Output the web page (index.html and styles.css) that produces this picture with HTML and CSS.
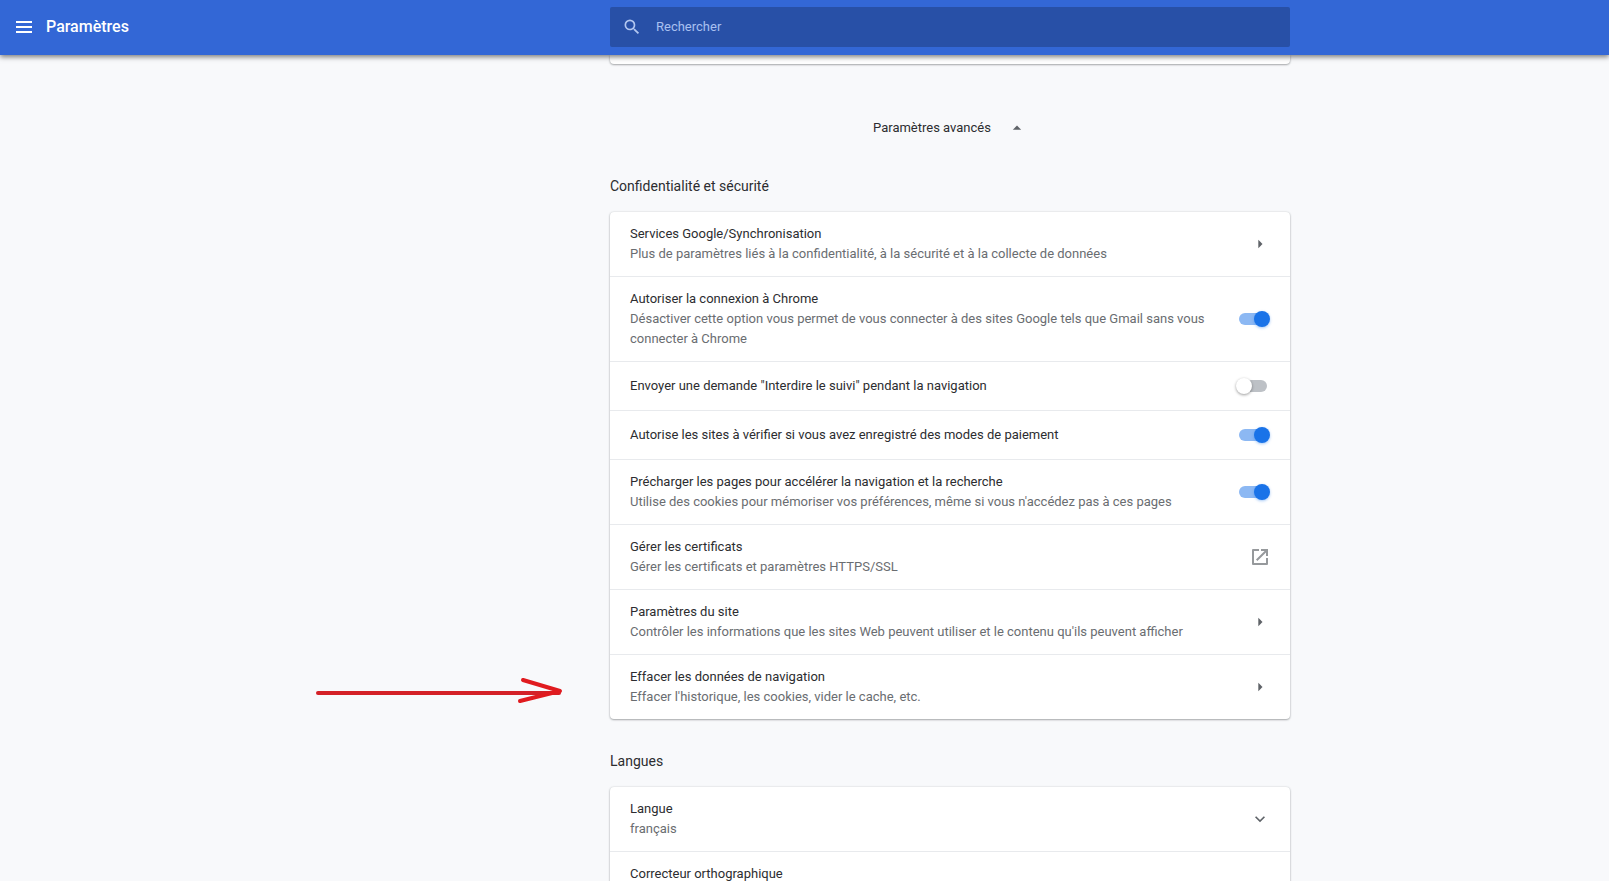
FILE: index.html
```html
<!DOCTYPE html>
<html lang="fr">
<head>
<meta charset="utf-8">
<title>Paramètres</title>
<link rel="stylesheet" href="styles.css">
</head>
<body>
<header class="toolbar">
  <div class="toolbar-left">
    <button class="menu-button" type="button" aria-label="Menu principal">
      <svg width="16" height="12" viewBox="0 0 16 12" fill="currentColor"><path d="M0 0h16v2H0zM0 5h16v2H0zM0 10h16v2H0z"/></svg>
    </button>
    <h1 class="toolbar-title">Paramètres</h1>
  </div>
  <label class="search">
    <svg class="search-icon" width="20" height="20" viewBox="0 0 24 24" fill="currentColor"><path d="M15.5 14h-.79l-.28-.27A6.471 6.471 0 0 0 16 9.5 6.5 6.5 0 1 0 9.5 16c1.61 0 3.09-.59 4.23-1.57l.27.28v.79l5 4.99L20.49 19l-4.99-5zm-6 0C7.01 14 5 11.99 5 9.5S7.01 5 9.5 5 14 7.01 14 9.5 11.99 14 9.5 14z"/></svg>
    <input class="search-input" type="search" placeholder="Rechercher" aria-label="Rechercher">
  </label>
</header>

<main class="page">
  <div class="content">
    <div class="card card-end"></div>

    <button class="advanced" type="button" aria-expanded="true">
      Paramètres avancés
      <svg width="20" height="20" viewBox="0 0 24 24" fill="#5f6368"><path d="M7 14l5-5 5 5z"/></svg>
    </button>

    <section>
      <h2 class="section-title">Confidentialité et sécurité</h2>
      <div class="card">
        <button class="row" type="button">
          <span class="text"><span class="label">Services Google/Synchronisation</span><span class="sub">Plus de paramètres liés à la confidentialité, à la sécurité et à la collecte de données</span></span>
          <svg class="icon" viewBox="0 0 24 24"><path d="M10 17l5-5-5-5z"/></svg>
        </button>
        <div class="row">
          <div class="text"><label class="label" for="signin">Autoriser la connexion à Chrome</label><span class="sub" id="signin-sub">Désactiver cette option vous permet de vous connecter à des sites Google tels que Gmail sans vous connecter à Chrome</span></div>
          <input class="toggle" type="checkbox" id="signin" aria-describedby="signin-sub" checked>
        </div>
        <div class="row">
          <div class="text"><label class="label" for="dnt">Envoyer une demande "Interdire le suivi" pendant la navigation</label></div>
          <input class="toggle" type="checkbox" id="dnt">
        </div>
        <div class="row">
          <div class="text"><label class="label" for="payment">Autorise les sites à vérifier si vous avez enregistré des modes de paiement</label></div>
          <input class="toggle" type="checkbox" id="payment" checked>
        </div>
        <div class="row">
          <div class="text"><label class="label" for="preload">Précharger les pages pour accélérer la navigation et la recherche</label><span class="sub" id="preload-sub">Utilise des cookies pour mémoriser vos préférences, même si vous n'accédez pas à ces pages</span></div>
          <input class="toggle" type="checkbox" id="preload" aria-describedby="preload-sub" checked>
        </div>
        <button class="row" type="button">
          <span class="text"><span class="label">Gérer les certificats</span><span class="sub">Gérer les certificats et paramètres HTTPS/SSL</span></span>
          <svg class="icon icon-external" viewBox="0 0 20 20"><path d="M3 2h6v2H4v12h12v-5h2v6a1 1 0 0 1-1 1H3a1 1 0 0 1-1-1V3a1 1 0 0 1 1-1zM11 2h7v7h-2V5.400L7.400 14 6 12.600 14.600 4H11z"/></svg>
        </button>
        <button class="row" type="button">
          <span class="text"><span class="label">Paramètres du site</span><span class="sub">Contrôler les informations que les sites Web peuvent utiliser et le contenu qu'ils peuvent afficher</span></span>
          <svg class="icon" viewBox="0 0 24 24"><path d="M10 17l5-5-5-5z"/></svg>
        </button>
        <button class="row" type="button">
          <span class="text"><span class="label">Effacer les données de navigation</span><span class="sub">Effacer l'historique, les cookies, vider le cache, etc.</span></span>
          <svg class="icon" viewBox="0 0 24 24"><path d="M10 17l5-5-5-5z"/></svg>
          <svg class="pointer" width="250" height="30" viewBox="0 0 250 30" fill="none" stroke-width="4" stroke-linecap="round" stroke-linejoin="round"><path d="M4 16H245" stroke="#d42127"/><path d="M209 3L246 14 206 24" stroke="#e01b1f"/></svg>
        </button>
      </div>
    </section>

    <section>
      <h2 class="section-title">Langues</h2>
      <div class="card">
        <button class="row" type="button" aria-expanded="false">
          <span class="text"><span class="label">Langue</span><span class="sub">français</span></span>
          <svg class="icon" viewBox="0 0 24 24"><path d="M16.590 8.590L12 13.170 7.410 8.590 6 10l6 6 6-6z"/></svg>
        </button>
        <button class="row row-top" type="button" aria-expanded="false">
          <span class="text"><span class="label">Correcteur orthographique</span></span>
        </button>
      </div>
    </section>
  </div>
</main>
</body>
</html>
```

FILE: styles.css
```css
* {
  box-sizing: border-box;
}

body {
  margin: 0;
  height: 100vh;
  display: flex;
  flex-direction: column;
  overflow: hidden;
  background: #f8f9fb;
  color: #2c2d30;
  font: 13px/20px Roboto, "Liberation Sans", sans-serif;
}

button {
  margin: 0;
  border: 0;
  padding: 0;
  background: none;
  color: inherit;
  font: inherit;
  text-align: left;
  cursor: pointer;
}

/* The header and the page share one set of columns. */
.toolbar,
.page {
  display: grid;
  grid-template-columns: 291px 1fr minmax(0, 680px) 1fr;
}

.toolbar {
  position: relative;
  z-index: 1;
  flex: none;
  align-items: center;
  height: 55px;
  padding-bottom: 1px;
  background: #3367d6;
  box-shadow: 0 2px 5px rgba(0, 0, 0, 0.5);
  color: #fff;
}

.toolbar-left {
  grid-column: 1 / 3;
  display: flex;
  align-items: center;
  gap: 14px;
  padding-left: 16px;
}

.menu-button {
  display: flex;
}

.toolbar-title {
  margin: 0;
  font-size: 16px;
  font-weight: 500;
}

.search {
  display: flex;
  align-items: center;
  gap: 14px;
  height: 40px;
  padding: 0 12px;
  border-radius: 2px;
  background: #2850a7;
  color: #b3c7f0;
}

.search-icon {
  flex: none;
}

.search-input {
  flex: 1;
  min-width: 0;
  padding: 0;
  border: 0;
  outline: 0;
  background: none;
  color: #fff;
  font: inherit;
}

.search-input::placeholder {
  color: #a9c0f0;
}

.page {
  flex: 1;
  min-height: 0;
  overflow: hidden;
}

.content {
  grid-column: 3;
  display: flex;
  flex-direction: column;
}

.card {
  border-radius: 4px;
  background: #fff;
  box-shadow: 0 1px 2px rgba(60, 64, 67, 0.4), 0 0 2px rgba(60, 64, 67, 0.2);
}

.card-end {
  flex: none;
  height: 9px;
  border-radius: 0 0 4px 4px;
}

.advanced {
  display: flex;
  align-items: center;
  align-self: center;
  gap: 16px;
  margin-top: 54px;
}

.section-title {
  margin: 0;
  padding: 32px 0 16px;
  font-size: 14px;
  font-weight: 400;
}

.advanced + section .section-title {
  padding-top: 38px;
}

.row {
  position: relative;
  display: flex;
  align-items: center;
  gap: 24px;
  width: 100%;
  min-height: 48px;
  padding: 12px 20px;
}

.row + .row {
  min-height: 49px;
  border-top: 1px solid #e8eaed;
}

.row-top {
  align-items: flex-start;
}

.text {
  flex: 1;
  display: flex;
  flex-direction: column;
}

.sub {
  color: #6a6d71;
}

.icon {
  flex: none;
  width: 20px;
  height: 20px;
  fill: #5f6368;
}

.icon-external {
  fill: #96999c;
}

.toggle {
  appearance: none;
  flex: none;
  display: flex;
  align-items: center;
  width: 34px;
  height: 16px;
  margin: 0;
  padding: 0 3px;
  cursor: pointer;
}

.toggle::before {
  content: "";
  flex: none;
  width: 28px;
  height: 12px;
  border-radius: 6px;
  background: #bdc1c6;
}

.toggle::after {
  content: "";
  flex: none;
  width: 16px;
  height: 16px;
  margin-left: -31px;
  border-radius: 50%;
  background: #fff;
  box-shadow: 0 1px 3px rgba(0, 0, 0, 0.4);
}

.toggle:checked::before {
  background: #8cb8f3;
}

.toggle:checked::after {
  margin-left: -13px;
  background: #1a73e8;
  box-shadow: 0 1px 3px rgba(26, 115, 232, 0.4);
}

/* Red arrow that points at the row from the left margin. */
.pointer {
  position: absolute;
  top: 22px;
  right: calc(100% + 46px);
}
```
